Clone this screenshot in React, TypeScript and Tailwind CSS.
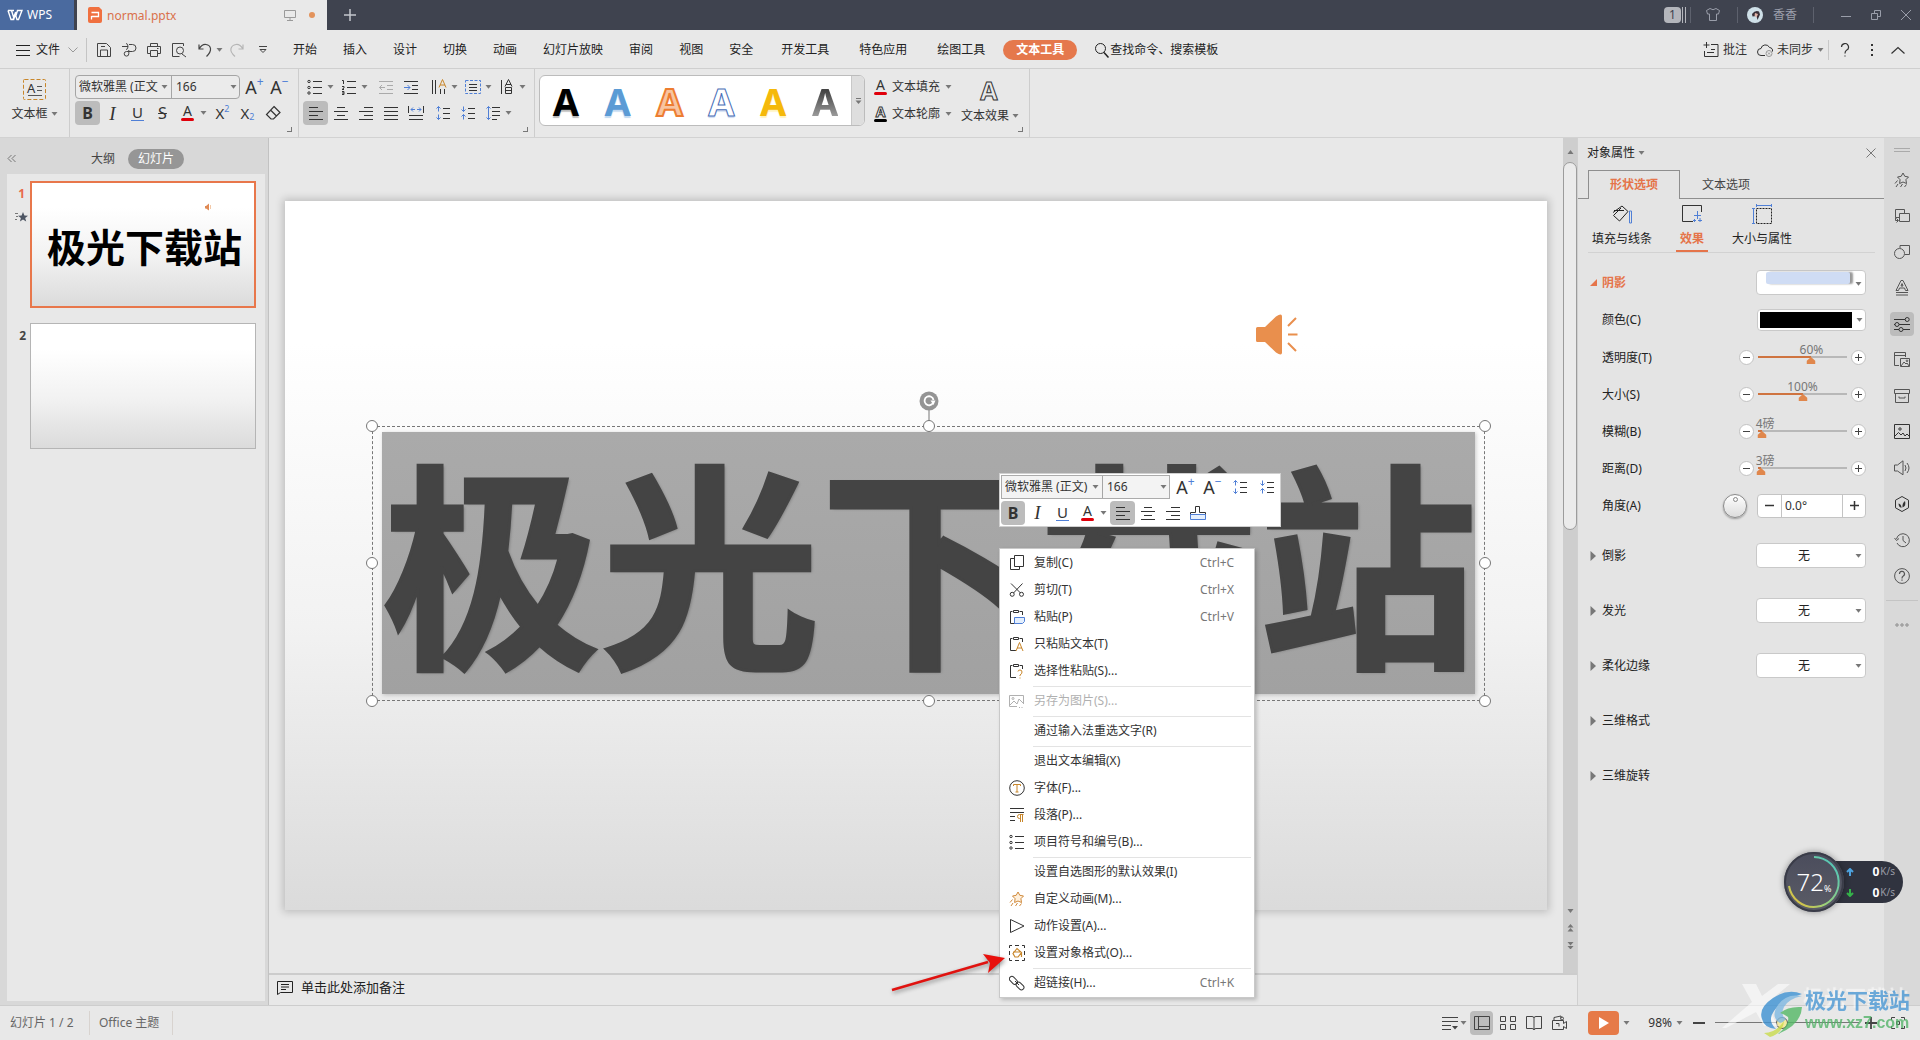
import React, { useState } from "react";
import type { ReactNode } from "react";

const BLUE = "#4f7fd6";
const GOLD = "#c8862a";

function Icon({ children, s = 16, className = "" }: { children: ReactNode; s?: number; className?: string }) {
  return (
    <svg
      width={s}
      height={s}
      viewBox={`0 0 ${s} ${s}`}
      fill="none"
      stroke="currentColor"
      strokeWidth="1"
      aria-hidden="true"
      className={`shrink-0 ${className}`}
    >
      {children}
    </svg>
  );
}

function Caret({ className = "" }: { className?: string }) {
  return (
    <svg width="7" height="4" viewBox="0 0 7 4" aria-hidden="true" className={`shrink-0 text-[#777] ${className}`}>
      <path d="M0.5 0h6L3.5 3.8z" fill="currentColor" />
    </svg>
  );
}

function Tool({
  label,
  children,
  active = false,
  className = "w-[25px]",
}: {
  label: string;
  children: ReactNode;
  active?: boolean;
  className?: string;
}) {
  return (
    <button
      type="button"
      aria-label={label}
      className={`flex h-6 shrink-0 items-center justify-center rounded ${active ? "bg-[#bcbcbc]" : ""} ${className}`}
    >
      {children}
    </button>
  );
}

function MoreTool({ label }: { label: string }) {
  return (
    <button type="button" aria-label={label} className="flex h-6 w-[10px] shrink-0 items-center">
      <Caret />
    </button>
  );
}

/* ---------- shared text-format glyphs ---------- */

function GrowA({ sign }: { sign: string }) {
  return (
    <span className="flex items-start leading-none">
      <span className="text-[18px] leading-[20px]">A</span>
      <span className="text-[12px] leading-[9px] text-[#4f7fd6]">{sign}</span>
    </span>
  );
}

const BoldI = () => <span className="text-[16px] leading-none font-bold">B</span>;
const ItalicI = () => <span className="font-['Liberation_Serif',serif] text-[19px] leading-none italic">I</span>;
const UnderI = () => (
  <span className="w-[13px] border-b border-[#4f7fd6] text-center text-[15px] leading-[15px]">U</span>
);
const ColorA = () => (
  <span className="flex flex-col items-center">
    <span className="text-[14px] leading-[12px]">A</span>
    <span className="mt-px h-[3px] w-[13px] rounded-sm bg-[#e0000b]" />
  </span>
);
const AlignL = () => (
  <Icon>
    <path d="M1 2.500h9M1 6.500h14M1 10.500h9M1 14.500h14" />
  </Icon>
);
const AlignC = () => (
  <Icon>
    <path d="M4 2.500h8M1 6.500h14M4 10.500h8M1 14.500h14" />
  </Icon>
);
const AlignR = () => (
  <Icon>
    <path d="M6 2.500h9M1 6.500h14M6 10.500h9M1 14.500h14" />
  </Icon>
);
const SpaceUp = () => (
  <Icon>
    <path d="M8 3.500h7M8 8.500h7M8 13.500h7" />
    <path stroke={BLUE} d="M3.500 1.500v5M1.500 3.500l2-2 2 2M3.500 9.500v5M1.500 12.500l2 2 2-2" />
  </Icon>
);
const SpaceDown = () => (
  <Icon>
    <path d="M8 3.500h7M8 8.500h7M8 13.500h7" />
    <path stroke={BLUE} d="M3.500 1.500v5M1.500 4.500l2 2 2-2M3.500 9.500v5M1.500 11.500l2-2 2 2" />
  </Icon>
);
const Bullets = () => (
  <Icon>
    <path d="M6 2.500h9M6 8.500h9M6 14.500h9" />
    <circle cx="2" cy="2.500" r="1.200" />
    <circle cx="2" cy="8.500" r="1.200" />
    <circle cx="2" cy="14" r="1.200" />
  </Icon>
);
const StarTrail = ({ color = "currentColor", fill = "none" }: { color?: string; fill?: string }) => (
  <Icon>
    <g stroke={color}>
      <path
        fill={fill}
        d="M9 1l1.800 3.300 3.700.700-2.600 2.700.600 3.800L9 10l-3.400 1.500.500-3.800L3.500 5l3.700-.700z"
      />
      <path d="M3.500 8.500l-2.500 3M4 12l-2 3M8.500 12l-2 3M12.500 12.500l-2 2.500" />
    </g>
  </Icon>
);

/* ---------- title bar ---------- */

function TitleBar() {
  return (
    <header className="flex h-[30px] items-stretch bg-[#3f434f] text-[#9a9eaa]">
      <button type="button" className="flex w-[74px] items-center gap-1 bg-[#4a6a9f] pl-[7px] text-[12px] text-white">
        <svg width="16" height="12" viewBox="0 0 16 12" fill="none" stroke="#fff" strokeWidth="1.400" aria-hidden="true">
          <path d="M1 1.500h3.500l2.500 8 2-6.500M7 1.500H5l-1 0M1 1.500l3 9h2l2.500-7M8 4.500l2 6h1.500L15 1.500h-4.500L8.500 8" />
        </svg>
        WPS
      </button>
      <div className="ml-[3px] flex w-[250px] items-center bg-[#e9e9e9] pr-3 pl-[11px]">
        <svg width="14" height="16" viewBox="0 0 14 16" aria-hidden="true">
          <path d="M2 0h9l3 3v11a2 2 0 0 1-2 2H2a2 2 0 0 1-2-2V2a2 2 0 0 1 2-2z" fill="#f0703f" />
          <path d="M3.500 5.500h7v4h-7M3.500 9v3.500" stroke="#fff" strokeWidth="1.300" fill="none" />
        </svg>
        <span className="ml-[5px] flex-1 pt-px text-[12px] text-[#d9714b]">normal.pptx</span>
        <svg width="12" height="12" viewBox="0 0 12 12" fill="none" stroke="#9a9a9a" aria-hidden="true">
          <path d="M.5 1.500h11v7H.5zM6 8.500v3M3 11.500h6" />
        </svg>
        <span className="ml-[13px] size-[6px] rounded-full bg-[#e3935c]" />
      </div>
      <button type="button" aria-label="新建标签" className="ml-4 px-[1px] text-[#c3c6cd]">
        <svg width="12" height="12" viewBox="0 0 12 12" stroke="currentColor" strokeWidth="1.500" aria-hidden="true">
          <path d="M6 0v12M0 6h12" />
        </svg>
      </button>
      <div className="ml-auto flex items-center pr-2">
        <span className="flex h-4 w-[17px] items-center justify-center rounded-sm bg-[#b4b6bc] text-[12px] text-[#3f434f]">1</span>
        <span className="ml-px h-4 w-[4px] border-x border-[#b4b6bc]" />
        <span className="ml-1 h-4 w-px bg-[#5d616d]" />
        <button type="button" aria-label="皮肤" className="ml-[14px]">
          <Icon>
            <path d="M5 1.500L1.500 3.500 2.500 7h2v6.500h7V7h2l1-3.500L11 1.500Q8 4 5 1.500z" />
          </Icon>
        </button>
        <span className="ml-4 h-4 w-px bg-[#5d616d]" />
        <svg width="16" height="16" viewBox="0 0 16 16" className="ml-[9px]" aria-hidden="true">
          <circle cx="8" cy="8" r="8" fill="#cfe0e8" />
          <path d="M5 7q3-4 7-2.500l1 3-2.500 5.500-1-4-4 .500z" fill="#3a3038" />
          <path d="M8 6l3 1-1.500 3.500L7.500 8.500z" fill="#e2b3a6" />
        </svg>
        <span className="ml-[10px] text-[12px]">香香</span>
        <span className="ml-4 h-4 w-px bg-[#5d616d]" />
        <button type="button" aria-label="最小化" className="ml-[26px]">
          <Icon s={12}>
            <path d="M1 7.500h10" />
          </Icon>
        </button>
        <button type="button" aria-label="还原" className="ml-[18px]">
          <Icon s={12}>
            <path d="M1.500 4.500h6v6h-6zM4.500 4.500v-3h6v6h-3" />
          </Icon>
        </button>
        <button type="button" aria-label="关闭" className="ml-[18px]">
          <Icon s={12}>
            <path d="M1 1l10 10M11 1L1 11" />
          </Icon>
        </button>
      </div>
    </header>
  );
}

/* ---------- menu row ---------- */

const shortTabs = ["开始", "插入", "设计", "切换", "动画", "幻灯片放映", "审阅", "视图", "安全"];
const longTabs = ["开发工具", "特色应用", "绘图工具"];

function MenuRow() {
  return (
    <nav className="flex h-[39px] items-center border-b border-[#cfcfcf] pt-px pr-[15px] pl-4 text-[12px] whitespace-nowrap text-[#222]">
      <button type="button" className="flex items-center">
        <Icon s={14}>
          <path d="M0 2.500h14M0 7.500h14M0 12.500h14" />
        </Icon>
        <span className="ml-[6px]">文件</span>
        <svg width="10" height="6" viewBox="0 0 10 6" fill="none" stroke="#999" className="ml-2" aria-hidden="true">
          <path d="M.5.5L5 5 9.500.5" />
        </svg>
      </button>
      <span className="ml-2 h-6 w-px bg-[#c4c4c4]" />
      <div className="ml-[4px] flex text-[#444]">
        <Tool label="保存">
          <Icon>
            <path d="M1.500 1.500h9l4 4v9h-13zM4.500 14v-6h7v6M5 4.500h4" />
          </Icon>
        </Tool>
        <Tool label="输出为PDF">
          <Icon>
            <path d="M1 4.500h6M5 1.500q2 0 2 3t-2 3M8 2.500h3.500a3.500 3.500 0 0 1 0 7H5.500a2.300 2.300 0 1 0 2.300 2.300V8" />
          </Icon>
        </Tool>
        <Tool label="打印">
          <Icon>
            <path d="M4.500 4V1.500h7V4M4.500 11.500h-3v-7h13v7h-3M4.500 8.500h7v6h-7zM11 6.500h1.500" />
          </Icon>
        </Tool>
        <Tool label="打印预览">
          <Icon>
            <path d="M12.500 4V1.500h-11v13h7M11 12L15 15" />
            <circle cx="9" cy="8.500" r="3.500" />
          </Icon>
        </Tool>
        <Tool label="撤销">
          <Icon>
            <path d="M3 2.500v4.500h4.500M3 7q3-5 7-4.500t4.500 4-4 8" strokeWidth="1.200" />
          </Icon>
        </Tool>
        <MoreTool label="撤销选项" />
        <Tool label="重做" className="w-[21px] text-[#b5b5b5]">
          <Icon>
            <path d="M14 2.500v4.500H9.500M14 7q-3-5-7-4.500t-5 4 4 8" strokeWidth="1.200" />
          </Icon>
        </Tool>
        <Tool label="自定义快速访问工具栏" className="w-8">
          <Icon s={8}>
            <path d="M0 .5h8M1 3.500l3 3 3-3z" />
          </Icon>
        </Tool>
      </div>
      <div className="ml-px flex">
        {shortTabs.map((t) => (
          <button type="button" key={t} className="px-[13px]">
            {t}
          </button>
        ))}
        {longTabs.map((t) => (
          <button type="button" key={t} className="px-[15px]">
            {t}
          </button>
        ))}
      </div>
      <button type="button" className="ml-[3px] h-5 rounded-full bg-[#e5784c] px-[13px] font-bold text-white">
        文本工具
      </button>
      <label className="ml-[17px] flex items-center">
        <Icon>
          <circle cx="6.500" cy="6.500" r="5" />
          <path d="M10 10.500l4.500 5" strokeWidth="1.500" />
        </Icon>
        <input
          aria-label="查找命令、搜索模板"
          placeholder="查找命令、搜索模板"
          className="w-[120px] bg-transparent outline-none placeholder:text-[#222]"
        />
      </label>
      <div className="ml-auto flex items-center text-[#333]">
        <button type="button" className="flex items-center gap-1">
          <Icon>
            <path d="M3.500 0v6M.5 3h6M8 2.500h7v12H1.500V9M4 10.500h7M8 7.500h4" />
          </Icon>
          批注
        </button>
        <button type="button" className="ml-[10px] flex items-center gap-1">
          <Icon>
            <path d="M8 13.500H4a3.500 3.500 0 0 1 0-7 4.500 4.500 0 0 1 8.500-1 3.500 3.500 0 0 1 3 4" />
            <circle cx="12" cy="11.500" r="3" stroke="#999" />
            <path d="M11 10.500l2 2M13 10.500l-2 2" stroke="#999" />
          </Icon>
          未同步
          <Caret />
        </button>
        <span className="ml-1 h-5 w-px bg-[#c8c8c8]" />
        <button type="button" aria-label="帮助" className="w-8">
          <Icon s={14} className="mx-auto">
            <path d="M3.500 4a3.500 3.500 0 1 1 5 3.200Q7 8 7 10.500M7 12.500v1" strokeWidth="1.200" />
          </Icon>
        </button>
        <button type="button" aria-label="更多" className="w-[22px]">
          <Icon s={14} className="mx-auto">
            <path d="M6 2h2M6 7h2M6 12h2" strokeWidth="2" />
          </Icon>
        </button>
        <button type="button" aria-label="收起功能区" className="ml-2">
          <Icon s={14}>
            <path d="M.5 10.500l6.500-6 6.500 6" strokeWidth="1.200" />
          </Icon>
        </button>
      </div>
    </nav>
  );
}

/* ---------- ribbon ---------- */

function Corner() {
  return <span className="absolute right-[6px] bottom-[5px] size-[5px] border-r border-b border-[#777]" />;
}

function FontBox({ font, mini = false }: { font: string; mini?: boolean }) {
  return (
    <div
      className={
        mini
          ? "flex h-6 w-[170px] border border-[#ababab] bg-[#f3f3f3]"
          : "flex h-6 w-[165px] rounded border border-[#a5a5a5] bg-[#ebebeb]"
      }
    >
      <span className={`relative flex items-center border-r border-[#a5a5a5] ${mini ? "w-[101px]" : "w-[96px]"}`}>
        <select
          aria-label="字体"
          className={`appearance-none overflow-hidden bg-transparent pl-[3px] text-[12px] outline-none ${mini ? "w-full" : "w-[84px]"}`}
        >
          <option>{font}</option>
        </select>
        <Caret className="pointer-events-none absolute right-[3px]" />
      </span>
      <span className="relative flex flex-1 items-center">
        <select aria-label="字号" className="w-full appearance-none bg-transparent pl-[4px] text-[12px] outline-none">
          <option>166</option>
        </select>
        <Caret className="pointer-events-none absolute right-[2px]" />
      </span>
    </div>
  );
}

const presets = [
  "text-black [text-shadow:0_2px_1px_#0004]",
  "text-[#5b9bd5] [text-shadow:0_2px_1px_#c3daf1]",
  "text-[#f8c5a0] [-webkit-text-stroke:2px_#ed7d31]",
  "text-white [-webkit-text-stroke:1px_#4a6fb8] [text-shadow:0_2px_1px_#cfdcf1]",
  "text-[#f5b90a] [text-shadow:0_2px_1px_#fff3c0]",
  "bg-linear-to-b from-[#444] from-30% to-[#c4c4c4] bg-clip-text text-transparent",
];

function Ribbon() {
  return (
    <div className="flex h-[69px] border-b border-[#d2d2d2] text-[#333]">
      <button type="button" className="flex w-[69px] flex-col items-center pt-[10px] text-[12px]">
        <svg width="24" height="21" viewBox="0 0 24 21" fill="none" aria-hidden="true">
          <rect x=".5" y=".5" width="22" height="20" rx="1" stroke={GOLD} strokeDasharray="4 2" />
          <text x="4" y="14" fontSize="13" fill="#333">A</text>
          <path d="M14 7.500h5M14 11.500h5M5 16.500h14" stroke="#555" />
        </svg>
        <span className="mt-[5px] flex items-center gap-[3px] leading-[18px]">
          文本框
          <Caret />
        </span>
      </button>
      <div className="relative flex w-[229px] flex-col gap-[2px] border-l border-[#cdcdcd] pt-[6px] pl-[5px]">
        <div className="flex">
          <FontBox font="微软雅黑 (正文" />
          <Tool label="增大字号" className="ml-[2px] w-[25px]"><GrowA sign="+" /></Tool>
          <Tool label="减小字号"><GrowA sign="−" /></Tool>
        </div>
        <div className="flex">
          <Tool label="加粗" active><BoldI /></Tool>
          <Tool label="倾斜"><ItalicI /></Tool>
          <Tool label="下划线"><UnderI /></Tool>
          <Tool label="删除线"><span className="text-[16px] leading-none line-through">S</span></Tool>
          <Tool label="字体颜色"><ColorA /></Tool>
          <MoreTool label="字体颜色选项" />
          <Tool label="上标">
            <span className="flex text-[15px] leading-4">X<span className="text-[9px] leading-[8px] text-[#4f7fd6]">2</span></span>
          </Tool>
          <Tool label="下标">
            <span className="flex items-end text-[15px] leading-4">X<span className="text-[9px] leading-[8px] text-[#4f7fd6]">2</span></span>
          </Tool>
          <Tool label="清除格式">
            <Icon><path d="M9 1.500L15 7.500 8.500 14H6L1.500 9.500zM5.500 5l6 6" strokeWidth="1.200" /></Icon>
          </Tool>
        </div>
        <Corner />
      </div>
      <div className="relative flex w-[236px] flex-col gap-[2px] border-l border-[#cdcdcd] pt-[6px] pl-[4px]">
        <div className="flex">
          <Tool label="项目符号" className="w-6"><Bullets /></Tool>
          <MoreTool label="项目符号选项" />
          <Tool label="编号" className="w-6">
            <Icon>
              <path d="M6 2.500h9M6 8.500h9M6 14.500h9M1 1.500h1.500V5M1 7.500h2v1.500l-2 1.500h2M1 12.500h2v3H1M1 14h2" />
            </Icon>
          </Tool>
          <MoreTool label="编号选项" />
          <Tool label="减少缩进" className="ml-[3px] w-6 text-[#aaa]">
            <Icon><path d="M1 2.500h14M9 6.500h6M9 10.500h6M1 14.500h14M7 8.500H1.500M4 6L1.500 8.500 4 11" /></Icon>
          </Tool>
          <Tool label="增加缩进" className="ml-px w-6">
            <Icon>
              <path d="M1 2.500h14M9 6.500h6M9 10.500h6M1 14.500h14" />
              <path stroke={BLUE} d="M1 8.500h6M4.500 6L7 8.500 4.500 11" />
            </Icon>
          </Tool>
          <Tool label="文字方向" className="ml-[4px] w-6">
            <Icon>
              <path d="M1.500 1v14M4.500 1v14M9.500 10v5M13.500 10v5" />
              <path stroke={GOLD} d="M8 8.500L11.500.5 15 8.500M9 6h5" />
            </Icon>
          </Tool>
          <MoreTool label="文字方向选项" />
          <Tool label="对齐文本" className="w-6">
            <Icon>
              <rect x=".5" y="1.500" width="15" height="13" stroke={BLUE} strokeDasharray="3 1.500" />
              <path d="M4 5.500h8M4 8.500h8M4 11.500h8" />
            </Icon>
          </Tool>
          <MoreTool label="对齐文本选项" />
          <Tool label="竖排" className="w-6">
            <Icon>
              <path d="M2.500 1v14M6 7.500L9.500.5 13 7.500M7 5.500h5M6.500 8.500h6v6h-6zM6.500 11.500h6" />
            </Icon>
          </Tool>
          <MoreTool label="竖排选项" />
        </div>
        <div className="flex">
          <Tool label="左对齐" active><AlignL /></Tool>
          <Tool label="居中"><AlignC /></Tool>
          <Tool label="右对齐"><AlignR /></Tool>
          <Tool label="两端对齐"><Icon><path d="M1 2.500h14M1 6.500h14M1 10.500h14M1 14.500h14" /></Icon></Tool>
          <Tool label="分散对齐">
            <Icon>
              <path d="M.5 1v7M15.500 1v7M1 10.500h14M1 14.500h14" />
              <path stroke={BLUE} d="M7 4.500H3M5 2.500l-2 2 2 2M9 4.500h4M11 2.500l2 2-2 2" />
            </Icon>
          </Tool>
          <Tool label="增大段间距" className="ml-[2px] w-[25px]"><SpaceUp /></Tool>
          <Tool label="减小段间距"><SpaceDown /></Tool>
          <Tool label="行距">
            <Icon>
              <path d="M7 2.500h8M7 6.500h8M7 10.500h8M7 14.500h5" />
              <path stroke={BLUE} d="M3.500 1.500v13M1.500 3.500l2-2 2 2M1.500 12.500l2 2 2-2" />
            </Icon>
          </Tool>
          <MoreTool label="行距选项" />
        </div>
        <Corner />
      </div>
      <div className="flex border-l border-[#cdcdcd] pt-[6px] pl-[4px]">
        <div className="flex h-[51px] w-[326px] overflow-hidden rounded-md border border-[#bcbcbc] bg-white">
          <div className="grid flex-1 grid-cols-6 font-['Noto_Sans',sans-serif] text-[38px] leading-[44px] font-bold">
            {presets.map((p, i) => (
              <button type="button" key={i} aria-label={`艺术字样式 ${i + 1}`} className="text-center">
                <span className={p}>A</span>
              </button>
            ))}
          </div>
          <button
            type="button"
            aria-label="更多样式"
            className="flex w-[13px] items-center justify-center border-l border-[#c8c8c8] bg-[#dedede]"
          >
            <svg width="7" height="6" viewBox="0 0 7 6" aria-hidden="true">
              <path d="M1 .5h5" stroke="#777" />
              <path d="M.5 2.500h6L3.500 6z" fill="#777" />
            </svg>
          </button>
        </div>
      </div>
      <div className="relative flex w-[165px] border-r border-[#cdcdcd] pt-[6px] pl-[9px] text-[12px] whitespace-nowrap">
        <div className="flex flex-col gap-[2px]">
          <button type="button" className="flex h-6 items-center gap-[5px]">
            <ColorA />
            <span>文本填充</span>
            <Caret />
          </button>
          <button type="button" className="flex h-[25px] items-center gap-[5px]">
            <span className="flex flex-col items-center">
              <span className="text-[14px] leading-[12px] font-bold text-white [-webkit-text-stroke:1px_#333]">A</span>
              <span className="mt-px h-[3px] w-[13px] rounded-sm bg-black" />
            </span>
            <span>文本轮廓</span>
            <Caret />
          </button>
        </div>
        <button type="button" className="ml-[9px] flex h-[51px] flex-col justify-between">
          <span className="w-[56px] text-center font-['Noto_Sans',sans-serif] text-[25px] leading-[30px] font-bold text-[#e8e8e8] [-webkit-text-stroke:1px_#333]">
            A
          </span>
          <span className="flex h-6 items-center gap-[3px]">
            文本效果
            <Caret />
          </span>
        </button>
        <Corner />
      </div>
    </div>
  );
}

/* ---------- slide list ---------- */

const slideBg = "bg-linear-to-b from-white from-20% via-[#f2f2f2] via-60% to-[#dbdbdb]";

function SlidePanel() {
  return (
    <aside className="flex w-[269px] shrink-0 flex-col border-r border-[#c2c2c2] bg-[#d8d8d8] pr-[3px] pb-1 pl-[7px] text-[12px]">
      <div className="flex h-9 items-center pt-[5px]">
        <button type="button" aria-label="收起" className="text-[#777]">
          <Icon s={9}>
            <path d="M4.500 1L1 4.500 4.500 8M8.500 1L5 4.500 8.500 8" />
          </Icon>
        </button>
        <button type="button" className="ml-[75px] text-[#444]">大纲</button>
        <button type="button" className="ml-[13px] h-5 rounded-full bg-[#969696] px-[10px] text-white">幻灯片</button>
      </div>
      <ol className="flex flex-1 flex-col gap-[15px] bg-[#e8e8e8] pt-[7px] pr-[9px]">
        <li className="flex">
          <span className="flex w-[23px] flex-col items-end gap-[9px] pt-[5px] pr-[5px] text-[12px] leading-4 font-bold text-[#e8694a]">
            1
            <svg width="13" height="12" viewBox="0 0 13 12" aria-hidden="true" className="-mr-[3px]">
              <path d="M0 2.500h3M1 5.500h2M0 8.500h2" stroke="#777" />
              <path d="M8 1l1.400 3.500 3.600.2-2.800 2.300 1 3.600L8 8.600l-3.100 2 1-3.600L3 4.700l3.600-.2z" fill="#4d5563" />
            </svg>
          </span>
          <button
            type="button"
            className={`relative flex h-[127px] flex-1 items-center justify-center border-2 border-[#e8774b] pl-[3px] ${slideBg}`}
          >
            <span className="font-['Noto_Sans_CJK_SC',sans-serif] text-[39px] leading-[40px] font-bold whitespace-nowrap text-black">
              极光下载站
            </span>
            <svg width="8" height="8" viewBox="0 0 8 8" className="absolute top-5 right-[41px]" aria-hidden="true">
              <path d="M0 3h1L4 .5v7L1 5.500H0z" fill="#e08a55" />
              <path d="M5.500 2v4" stroke="#f3c9a8" />
            </svg>
          </button>
        </li>
        <li className="flex">
          <span className="w-[23px] pt-[5px] pr-[4px] text-right text-[12px] leading-4 font-bold text-[#444]">2</span>
          <button type="button" aria-label="幻灯片 2" className={`h-[126px] flex-1 border border-[#b5b5b5] ${slideBg}`} />
        </li>
      </ol>
    </aside>
  );
}

/* ---------- floating toolbar and menu ---------- */

function MiniToolbar() {
  return (
    <div className="absolute top-[272px] left-[714px] h-[54px] w-[282px] border border-[#d0d0d0] bg-white pt-px pl-px text-[#333]">
      <div className="flex">
        <FontBox font="微软雅黑 (正文)" mini />
        <Tool label="增大字号" className="ml-[2px] w-[27px]"><GrowA sign="+" /></Tool>
        <Tool label="减小字号" className="w-[27px]"><GrowA sign="−" /></Tool>
        <Tool label="增大段间距" className="w-[27px]"><SpaceUp /></Tool>
        <Tool label="减小段间距" className="w-[27px]"><SpaceDown /></Tool>
      </div>
      <div className="mt-[2px] flex">
        <Tool label="加粗" active className="w-6"><BoldI /></Tool>
        <Tool label="倾斜"><ItalicI /></Tool>
        <Tool label="下划线"><UnderI /></Tool>
        <Tool label="字体颜色"><ColorA /></Tool>
        <MoreTool label="字体颜色选项" />
        <Tool label="左对齐" active><AlignL /></Tool>
        <Tool label="居中"><AlignC /></Tool>
        <Tool label="右对齐"><AlignR /></Tool>
        <Tool label="格式刷">
          <Icon>
            <path d="M.5 12V7.500h5V1.500h4v6h6V12" />
            <path d="M.5 9.500h15v5H.5z" stroke={BLUE} fill="#e4effd" />
          </Icon>
        </Tool>
      </div>
    </div>
  );
}

const Clip = ({ children }: { children: ReactNode }) => (
  <Icon>
    <path d="M7 14.500H1.500v-12h2M10.500 2.500h3V6M4.500 1.500h5v2h-5z" />
    {children}
  </Icon>
);

type Entry = { label: string; icon?: ReactNode; key?: string; off?: boolean } | null;

const entries: Entry[] = [
  {
    label: "复制(C)",
    key: "Ctrl+C",
    icon: (
      <Icon>
        <path d="M5.500.5h9v11h-9zM5 3.500H1.500v11h9V12" />
      </Icon>
    ),
  },
  {
    label: "剪切(T)",
    key: "Ctrl+X",
    icon: (
      <Icon>
        <path d="M2 1.500l9.500 9.500M13.500 1.500L4.500 11" />
        <circle cx="3.200" cy="12.300" r="2" />
        <circle cx="12.500" cy="12.300" r="2" />
      </Icon>
    ),
  },
  {
    label: "粘贴(P)",
    key: "Ctrl+V",
    icon: (
      <Clip>
        <path d="M5.500 8.500h10v4l-2 2h-8z" stroke={BLUE} fill="#e4effd" />
      </Clip>
    ),
  },
  {
    label: "只粘贴文本(T)",
    icon: (
      <Clip>
        <path d="M7 15l3.500-8.500L14 15M8 12h5" stroke={GOLD} />
      </Clip>
    ),
  },
  {
    label: "选择性粘贴(S)...",
    icon: (
      <Clip>
        <path d="M9 8.500q0-1.500 2-1.500t2 2-2 3V13M11 14.500v1" stroke={GOLD} />
      </Clip>
    ),
  },
  null,
  {
    label: "另存为图片(S)...",
    off: true,
    icon: (
      <Icon>
        <path d="M8 13.500H.5v-11h14V11M1 12l4-4 3 3 2-5 4 4M10 14.500h1M12.500 14.500h1" />
        <circle cx="4" cy="5.500" r="1" />
      </Icon>
    ),
  },
  null,
  { label: "通过输入法重选文字(R)" },
  null,
  { label: "退出文本编辑(X)" },
  {
    label: "字体(F)...",
    icon: (
      <Icon>
        <circle cx="8" cy="8" r="7.300" />
        <path d="M4.500 6V4.500h7V6M8 4.500v7.500M6.500 12h3" stroke={GOLD} />
      </Icon>
    ),
  },
  {
    label: "段落(P)...",
    icon: (
      <Icon>
        <path d="M1 1.500h14M1 5.500h14M1 9.500h5M1 13.500h5" />
        <path d="M14.500 7.500h-4a2 2 0 0 0 0 4h1M11.500 7.500V15M13.500 7.500V15" stroke={GOLD} />
      </Icon>
    ),
  },
  { label: "项目符号和编号(B)...", icon: <Bullets /> },
  null,
  { label: "设置自选图形的默认效果(I)" },
  { label: "自定义动画(M)...", icon: <StarTrail color="#d08a3c" fill="#fff0dc" /> },
  {
    label: "动作设置(A)...",
    icon: (
      <Icon>
        <path d="M1.500 1.500L15 8 1.500 14.500z" />
      </Icon>
    ),
  },
  {
    label: "设置对象格式(O)...",
    icon: (
      <Icon>
        <path d="M.5 3V.5H3M6 .5h4M13 .5h2.500V3M15.500 6v4M15.500 13v2.500H13M10 15.500H6M3 15.500H.5V13M.5 10V6" />
        <path d="M4 8.500l4-5 4.500 4-3.500 4.500H6zM4 7h8M12.500 8v4" stroke={GOLD} strokeWidth="1.200" />
      </Icon>
    ),
  },
  null,
  {
    label: "超链接(H)...",
    key: "Ctrl+K",
    icon: (
      <Icon>
        <rect x="-1" y="2.500" width="9" height="5" rx="2.500" transform="rotate(45 4 5) translate(1 0)" />
        <rect x="6.500" y="8.500" width="9" height="5" rx="2.500" transform="rotate(45 11 11)" />
        <path d="M6 6l4 4" />
      </Icon>
    ),
  },
];

function ContextMenu() {
  return (
    <div
      role="menu"
      className="absolute top-[347px] left-[714px] w-[256px] border border-[#c9c9c9] bg-white pt-px text-[12px] text-[#333] shadow-[2px_2px_4px_#0003]"
    >
      {entries.map((e, i) =>
        e ? (
          <button
            type="button"
            role="menuitem"
            key={e.label}
            disabled={e.off}
            className={`flex h-[27px] w-full items-center pr-[18px] pl-[9px] ${e.off ? "text-[#b0b0b0]" : ""}`}
          >
            <span className="w-[25px]">{e.icon}</span>
            <span>{e.label}</span>
            <span className="ml-auto w-[38px] text-[#777]">{e.key}</span>
          </button>
        ) : (
          <hr key={i} className="my-px mr-[3px] ml-[33px] border-[#e3e3e3]" />
        ),
      )}
    </div>
  );
}

/* ---------- editing area ---------- */

const handles = [
  "-top-[7px] -left-[7px]",
  "-top-[7px] left-1/2 -translate-x-1/2",
  "-top-[7px] -right-[7px]",
  "top-1/2 -left-[7px] -translate-y-1/2",
  "top-1/2 -right-[7px] -translate-y-1/2",
  "-bottom-[7px] -left-[7px]",
  "-bottom-[7px] left-1/2 -translate-x-1/2",
  "-right-[7px] -bottom-[7px]",
];

function Slide() {
  return (
    <div className={`relative aspect-video w-full shadow-[0_0_8px_2px_#00000030] ${slideBg}`}>
      <svg width="42" height="42" viewBox="0 0 42 42" className="absolute top-[113px] left-[971px]" aria-hidden="true">
        <path d="M0 14.500q0-1.500 1.500-1.500H9L20 2.500q6-4 6 0v36q0 4-6 0L9 28H1.500Q0 28 0 26.500z" fill="#e98f4d" />
        <path d="M32 12l8-8M32 20.500h9.500M32 29l8 8" stroke="#e98f4d" strokeWidth="2" />
      </svg>
      <div className="absolute top-[225px] left-[87px] h-[275px] w-[1113px] border border-dashed border-[#777] p-[5px_9px_6px_9px]">
        <p className="h-full bg-linear-to-b from-[#aaaaaa] to-[#a1a1a1] text-center font-['Noto_Sans_CJK_SC',sans-serif] text-[219px] leading-[249px] font-bold whitespace-nowrap text-[#444] shadow-[1px_1px_4px_#0003] [-webkit-text-stroke:3px_#444] [text-shadow:2px_1px_3px_#0004]">
          极光下载站
        </p>
        {handles.map((h) => (
          <span key={h} className={`absolute size-3 rounded-full border border-[#777] bg-white ${h}`} />
        ))}
        <svg width="20" height="30" viewBox="0 0 20 30" className="absolute -top-[36px] left-1/2 -translate-x-1/2" aria-hidden="true">
          <path d="M10 18v12" stroke="#777" />
          <circle cx="10" cy="10" r="9.500" fill="#949494" />
          <path d="M14 12a4.500 4.500 0 1 1 .5-3" stroke="#fff" strokeWidth="1.800" fill="none" />
          <path d="M11.500 9.500h5L14.500 14z" fill="#fff" />
        </svg>
      </div>
      <MiniToolbar />
      <ContextMenu />
      <svg
        width="120"
        height="44"
        viewBox="0 0 120 44"
        className="absolute top-[751px] left-[604px] drop-shadow-[1px_2px_2px_#0006]"
        aria-hidden="true"
      >
        <path d="M3 38L99 10" stroke="#e0120f" strokeWidth="2.500" />
        <path d="M94 2l22 4-17 15 2-10z" fill="#e8100c" />
      </svg>
    </div>
  );
}

function VerticalScroll() {
  return (
    <div className="flex w-[14px] shrink-0 flex-col items-center bg-[#cecece] pt-[12px] pb-6 text-[#777]">
      <svg width="7" height="4" viewBox="0 0 7 4" aria-hidden="true">
        <path d="M.5 4h6L3.500 0z" fill="currentColor" />
      </svg>
      <span className="mt-2 h-[368px] w-[14px] rounded-full border border-[#9c9c9c] bg-[#ebebeb]" />
      <svg width="7" height="40" viewBox="0 0 7 40" className="mt-auto" aria-hidden="true">
        <path d="M.5 0h6L3.500 4zM.5 18.500h6l-3-3.500zM.5 22.500h6l-3-3.500zM.5 33h6l-3 3.500zM.5 37h6l-3 3.500z" fill="currentColor" />
      </svg>
    </div>
  );
}

function Editor() {
  return (
    <main className="flex min-w-0 flex-1 flex-col">
      <div className="flex flex-1">
        <div className="flex min-w-0 flex-1 items-center px-4">
          <Slide />
        </div>
        <VerticalScroll />
      </div>
      <label className="flex h-8 items-center border-t-2 border-[#cccccc] pb-1 pl-2 text-[13px] text-[#222]">
        <Icon>
          <path d="M.5 1.500h15v11h-12l-3 2zM4 4.500h8M4 7h8M4 9.500h5" />
        </Icon>
        <input
          aria-label="备注"
          placeholder="单击此处添加备注"
          className="ml-2 flex-1 bg-transparent outline-none placeholder:text-[#222]"
        />
      </label>
    </main>
  );
}

/* ---------- property panel ---------- */

function RoundBtn({ label, plus = false }: { label: string; plus?: boolean }) {
  return (
    <button
      type="button"
      aria-label={label}
      className="flex size-[15px] items-center justify-center rounded-full border border-[#c2c2c2] bg-white text-[#444]"
    >
      <Icon s={9}>
        <path d={plus ? "M1 4.500h7M4.500 1v7" : "M1 4.500h7"} />
      </Icon>
    </button>
  );
}

function SliderRow({ label, text, start }: { label: string; text: string; start: number }) {
  const [v, setV] = useState(start);
  return (
    <label className="flex h-[37px] items-center pl-[13px]">
      <span className="flex-1">{label}</span>
      <RoundBtn label={`减小 ${label}`} plus={false} />
      <span className="relative mx-1 h-[37px] w-[89px]">
        <span className="absolute top-[17px] h-[2px] w-full bg-[#b8b8b8]" />
        <span className="absolute top-[17px] h-[2px] bg-[#cf7440]" style={{ width: `${v}%` }} />
        <span
          className="absolute top-[2px] -translate-x-1/2 leading-[18px] whitespace-nowrap text-[#777]"
          style={{ left: `${Math.max(v, 8)}%` }}
        >
          {text}
        </span>
        <svg
          width="9"
          height="7"
          viewBox="0 0 9 7"
          className="absolute top-[18px] -translate-x-1/2"
          style={{ left: `${v}%` }}
          aria-hidden="true"
        >
          <path d="M4.500 0L9 4v3H0V4z" fill="#e0874c" />
        </svg>
        <input
          type="range"
          aria-label={label}
          value={v}
          onChange={(e) => setV(Number(e.target.value))}
          className="absolute inset-0 h-full w-full opacity-0"
        />
      </span>
      <RoundBtn label={`增大 ${label}`} plus />
    </label>
  );
}

function NoneRow({ label, select = false }: { label: string; select?: boolean }) {
  return (
    <div className="flex h-[55px] items-center">
      <button type="button" className="flex flex-1 items-center gap-[6px] pl-px">
        <svg width="6" height="10" viewBox="0 0 6 10" aria-hidden="true">
          <path d="M.5 0v10L6 5z" fill="#777" />
        </svg>
        {label}
      </button>
      {select && (
        <span className="relative flex h-[25px] w-[110px] items-center rounded border border-[#c9c9c9] bg-white">
          <select aria-label={label} className="w-full appearance-none bg-transparent pr-[14px] text-center outline-none">
            <option>无</option>
          </select>
          <Caret className="pointer-events-none absolute right-[3px]" />
        </span>
      )}
    </div>
  );
}

function PropertyPanel() {
  return (
    <section className="w-[307px] shrink-0 border-l border-[#d0d0d0] bg-[#e4e4e4] text-[12px] text-[#222]">
      <div className="flex h-[32px] items-center pr-[8px] pb-[2px] pl-[9px]">
        <button type="button" className="flex items-center gap-[3px]">
          对象属性
          <Caret />
        </button>
        <button type="button" aria-label="关闭窗格" className="ml-auto text-[#777]">
          <Icon s={10}>
            <path d="M.5.500l9 9M9.500.500l-9 9" />
          </Icon>
        </button>
      </div>
      <div className="flex h-[29px]" role="tablist">
        <span className="w-[10px] border-b border-[#8e8e8e]" />
        <button
          type="button"
          role="tab"
          className="w-[92px] border border-b-0 border-[#8e8e8e] font-bold text-[#e5744a]"
        >
          形状选项
        </button>
        <span className="flex-1 border-b border-[#8e8e8e] pt-px pl-[22px]">
          <button type="button" role="tab" className="h-7 text-[#444]">
            文本选项
          </button>
        </span>
      </div>
      <div className="mr-[9px] ml-[10px] flex h-[54px] items-end border-b border-[#d2d2d2]">
        <button type="button" className="flex h-[54px] w-[68px] flex-col items-center gap-[7px] pt-[6px]">
          <Icon s={20}>
            <path d="M1 8.500l9-6.500 6 5.500-8.500 9.500L1.500 11.500 9 4M2 6.500h10" />
            <path d="M17.500 7h2v12h-2z" stroke={BLUE} />
          </Icon>
          <span className="leading-4">填充与线条</span>
        </button>
        <button
          type="button"
          className="mx-5 flex h-[54px] w-8 flex-col items-center gap-[7px] border-b-2 border-[#e5744a] pt-[6px] font-bold text-[#e5744a]"
        >
          <Icon s={20} className="text-[#333]">
            <path d="M11 17.500H.5v-16h19V8" />
            <path d="M15.500 7v8M12 11.500h7M12.500 15v3M11 16.500h3M18 14v4M16 16.500h4" stroke={BLUE} />
          </Icon>
          <span className="leading-4 whitespace-nowrap">效果</span>
        </button>
        <button type="button" className="flex h-[54px] w-[68px] flex-col items-center gap-[7px] pt-[6px]">
          <Icon s={20}>
            <rect x="4.500" y="4.500" width="15" height="15" strokeDasharray="2 1" />
            <path d="M4 1.500h15.500M4.500 0v3M19.500 0v3M1.500 4v15.500M0 4.500h3M0 19.500h3" stroke={BLUE} />
          </Icon>
          <span className="leading-4">大小与属性</span>
        </button>
      </div>
      <div className="mt-[11px] mr-[18px] ml-[11px]">
        <div className="flex h-[37px] items-center">
          <button type="button" className="flex flex-1 items-center gap-[5px] pl-px font-bold text-[#e5744a]">
            <svg width="7" height="7" viewBox="0 0 7 7" aria-hidden="true">
              <path d="M7 0v7H0z" fill="currentColor" />
            </svg>
            阴影
          </button>
          <button
            type="button"
            aria-label="阴影样式"
            className="relative h-[25px] w-[110px] rounded border border-[#c9c9c9] bg-white"
          >
            <span className="absolute top-px left-[9px] h-3 w-[84px] rounded-xs bg-[#cfdcf4] shadow-[3px_0_2px_#999]" />
            <Caret className="absolute top-[11px] right-[3px]" />
          </button>
        </div>
        <div className="flex h-[38px] items-center pl-[13px]">
          <span className="flex-1">颜色(C)</span>
          <button
            type="button"
            aria-label="颜色"
            className="flex h-[22px] w-[109px] items-center justify-between rounded border border-[#c9c9c9] bg-white pr-[2px] pl-[2px]"
          >
            <span className="h-4 w-[92px] bg-black" />
            <Caret />
          </button>
        </div>
        <SliderRow label="透明度(T)" text="60%" start={60} />
        <SliderRow label="大小(S)" text="100%" start={50} />
        <SliderRow label="模糊(B)" text="4磅" start={5} />
        <SliderRow label="距离(D)" text="3磅" start={3} />
        <div className="flex h-[37px] items-center pl-[13px]">
          <span className="flex-1">角度(A)</span>
          <span className="mr-[10px] flex size-6 justify-center rounded-full border border-[#8a8a8a] bg-linear-to-b from-white to-[#dcdcdc] pt-[2px] shadow-[0_1px_2px_#0005]">
            <span className="size-[5px] rounded-full border border-[#888]" />
          </span>
          <span className="flex h-6 w-[109px] items-center rounded border border-[#c4c4c4] bg-white text-[#333]">
            <button type="button" aria-label="减小角度" className="flex w-[23px] justify-center">
              <Icon s={9}>
                <path d="M0 4.500h9" strokeWidth="1.500" />
              </Icon>
            </button>
            <input
              aria-label="角度"
              defaultValue="0.0°"
              className="h-full w-[62px] border-x border-[#c4c4c4] pl-[3px] outline-none"
            />
            <button type="button" aria-label="增大角度" className="flex flex-1 justify-center">
              <Icon s={9}>
                <path d="M0 4.500h9M4.500 0v9" strokeWidth="1.500" />
              </Icon>
            </button>
          </span>
        </div>
        <div className="mt-1">
          <NoneRow label="倒影" select />
          <NoneRow label="发光" select />
          <NoneRow label="柔化边缘" select />
          <NoneRow label="三维格式" />
          <NoneRow label="三维旋转" />
        </div>
      </div>
    </section>
  );
}

const rail: [string, ReactNode][] = [
  ["动画", <StarTrail />],
  [
    "切换",
    <Icon>
      <path d="M5 9.500H1.500v-8h9V5M5.500 5.500h10v8h-10zM1.500 9.500v3H4M2.500 10.500l2 2-2 2" />
    </Icon>,
  ],
  [
    "形状",
    <Icon>
      <circle cx="5.500" cy="9.500" r="5" />
      <path d="M6 4V1.500h9.500v9H11" />
    </Icon>,
  ],
  [
    "艺术字",
    <Icon>
      <path d="M2 10.500L7 .5h2l5 10h-2.500L10.500 8h-5l-1 2.500zM7 6h2L8 3.500zM2 12.500h12M2 15h12" />
    </Icon>,
  ],
  [
    "属性",
    <Icon className="text-[#333]">
      <path d="M0 3.500h11M5 8.500h11M0 13.500h5M9 13.500h7M0 8.500h1" />
      <circle cx="13.200" cy="3.500" r="2" />
      <circle cx="3" cy="8.500" r="2" />
      <circle cx="7" cy="13.500" r="2" />
    </Icon>,
  ],
  [
    "模板",
    <Icon>
      <path d="M5 13.500H.5V.5h11V5M.5 3.500h11M6.500 6.500h9v8h-9zM7 14l3-4 2 2 1-1 2 3" />
      <circle cx="13" cy="8.800" r=".8" />
    </Icon>,
  ],
  [
    "素材",
    <Icon>
      <path d="M.5 1.500h15v4H.5zM1.500 5.500h13v9h-13zM5 8.500v1.500h6V8.500" />
    </Icon>,
  ],
  [
    "图片",
    <Icon className="text-[#333]">
      <path d="M.5.5h15v14H.5zM1 12l3.500-3.500L7 11l2-2 2 3 2-2 2 2" />
      <circle cx="6" cy="5" r="1.200" />
    </Icon>,
  ],
  [
    "音频",
    <Icon>
      <path d="M.5 5h3L9 .8v14L3.500 11h-3zM11 5q2 3 0 6M13 3q4 5 0 10" />
    </Icon>,
  ],
  [
    "推荐",
    <Icon className="text-[#333]">
      <path d="M8 .5l6.500 3.700v7.600L8 15.500 1.500 11.800V4.200z" />
      <path d="M7.500 12Q4.500 11 4.500 7.500q3 .5 3 4.500zM8.500 11.500Q8 7 11 5q1.500 5-2.500 6.500z" fill="currentColor" stroke="none" />
    </Icon>,
  ],
  [
    "历史",
    <Icon>
      <path d="M3 11A6.500 6.500 0 1 0 2.500 7M.5 6l2 2.500L5 6.500M9 4v4.500l3 2.500" />
    </Icon>,
  ],
  [
    "帮助",
    <Icon>
      <circle cx="8" cy="8" r="7.400" />
      <path d="M5.500 6A2.500 2.500 0 1 1 9 8.200Q8 8.800 8 10.500M8 11.500v1.300" strokeWidth="1.200" />
    </Icon>,
  ],
];

function Rail() {
  return (
    <div className="flex w-9 shrink-0 flex-col items-center bg-[#d9d9d9] text-[#555]">
      <svg width="16" height="4" viewBox="0 0 16 4" stroke="#aaa" className="mt-[10px]" aria-hidden="true">
        <path d="M0 .5h16M0 3.500h16" />
      </svg>
      <div className="mt-[16px] flex flex-col gap-3">
        {rail.map(([label, icon]) => (
          <Tool key={label} label={label} active={label === "属性"} className="w-6">
            {icon}
          </Tool>
        ))}
      </div>
      <span className="mt-3 h-px w-8 bg-[#c4c4c4]" />
      <button type="button" aria-label="更多工具" className="mt-[22px]">
        <svg width="14" height="4" viewBox="0 0 14 4" fill="none" stroke="#888" aria-hidden="true">
          <circle cx="2" cy="2" r="1.200" />
          <circle cx="7" cy="2" r="1.200" />
          <circle cx="12" cy="2" r="1.200" />
        </svg>
      </button>
    </div>
  );
}

/* ---------- status bar ---------- */

function StatusBar() {
  return (
    <footer className="flex h-[35px] items-center border-t border-[#cdcdcd] pr-[15px] pb-px pl-[10px] text-[12px] whitespace-nowrap text-[#666]">
      <span className="w-[79px]">幻灯片 1 / 2</span>
      <span className="h-6 w-px bg-[#d8d3cf]" />
      <span className="w-[82px] pl-[9px]">Office 主题</span>
      <span className="h-6 w-px bg-[#d8d3cf]" />
      <div className="ml-auto flex items-center text-[#444]">
        <Tool label="备注" className="w-5">
          <Icon>
            <path d="M0 2.500h16M0 6.500h16M0 10.500h9M0 14.500h9" />
            <path d="M10 11h6l-3 3.500z" fill="currentColor" stroke="none" />
          </Icon>
        </Tool>
        <MoreTool label="备注选项" />
        <Tool label="普通视图" active className="w-[23px]">
          <Icon>
            <path d="M.5 1.500h15v13H.5zM4.500 1.500v13M4.500 11.500h11" />
          </Icon>
        </Tool>
        <Tool label="幻灯片浏览" className="ml-[2px] w-[26px]">
          <Icon>
            <path d="M.5 1.500h5v5h-5zM10.500 1.500h5v5h-5zM.5 9.500h5v5h-5zM10.500 9.500h5v5h-5z" />
          </Icon>
        </Tool>
        <Tool label="阅读视图" className="w-[26px]">
          <Icon>
            <path d="M.5 1.500H6q2 0 2 1.500 0-1.500 2-1.500h5.500v12H10q-2 0-2 1.500 0-1.500-2-1.500H.5zM8 3v12" />
          </Icon>
        </Tool>
        <Tool label="录制" className="w-[26px]">
          <Icon>
            <path d="M.5 5.500h11v3l3-2v7l-3-2v3H.5zM2 5V2.500l7-1.500v2.500M4 8.500h3v3" />
            <circle cx="10" cy="3.500" r="1.500" />
          </Icon>
        </Tool>
        <button
          type="button"
          aria-label="放映"
          className="ml-[15px] flex h-6 w-[31px] items-center justify-center rounded bg-[#e67a48]"
        >
          <svg width="10" height="12" viewBox="0 0 10 12" aria-hidden="true">
            <path d="M0 0l10 6-10 6z" fill="#fff" />
          </svg>
        </button>
        <Caret className="ml-1" />
        <button type="button" className="ml-[18px] flex items-center gap-1 text-[#333]">
          98%
          <Caret />
        </button>
        <button type="button" aria-label="缩小" className="ml-[10px] h-[2px] w-3 bg-[#444]" />
        <span className="relative ml-[10px] flex h-6 w-[144px] items-center">
          <span className="h-px w-full bg-[#777]" />
          <span className="absolute left-[61px] size-3 rounded-full border border-[#555] bg-[#f3e9a0]" />
          <input type="range" aria-label="缩放" defaultValue={47} className="absolute inset-0 w-full opacity-0" />
        </span>
        <button type="button" aria-label="放大" className="ml-[6px]">
          <Icon s={12}>
            <path d="M6 0v12M0 6h12" strokeWidth="1.800" />
          </Icon>
        </button>
        <button type="button" aria-label="全屏" className="ml-[14px]">
          <Icon s={14}>
            <path d="M.5 4V1.500H4M10 1.500h3.500V4M13.500 10v2.500H10M4 12.500H.5V10M5.500 5.500h3v3h-3z" />
          </Icon>
        </button>
      </div>
    </footer>
  );
}

/* ---------- overlays ---------- */

function NetMeter() {
  return (
    <div className="absolute right-[17px] bottom-[128px] flex items-center">
      <div className="relative z-10 flex size-[60px] items-center justify-center rounded-full bg-linear-to-b from-[#4a4c5c] to-[#5b5c66] text-white shadow-[0_0_6px_#0006]">
        <svg width="60" height="60" viewBox="0 0 60 60" fill="none" className="absolute inset-0" aria-hidden="true">
          <defs>
            <linearGradient id="ring" x1="1" y1="0" x2="0" y2="1">
              <stop offset="0" stopColor="#45c2c4" />
              <stop offset="0.600" stopColor="#9ad27c" />
              <stop offset="1" stopColor="#f1b92e" />
            </linearGradient>
          </defs>
          <circle cx="30" cy="30" r="29" stroke="#3a3c48" strokeWidth="2" />
          <path d="M30 5a25 25 0 1 1-25 29" stroke="url(#ring)" strokeWidth="2" />
        </svg>
        <span className="text-[24px] leading-none font-light">72</span>
        <span className="self-end pb-[19px] text-[9px] leading-none">%</span>
      </div>
      <div className="-ml-[10px] flex h-[42px] w-[69px] flex-col justify-center rounded-r-full bg-[#30333f] pr-2 pl-[12px] text-[12px] leading-[21px]">
        <span className="flex items-center">
          <Icon s={8} className="text-[#4da3e0]">
            <path d="M4 8V1M1 4l3-3 3 3" strokeWidth="2" />
          </Icon>
          <b className="ml-auto text-white">0</b>
          <span className="ml-px text-[10px] text-[#9a9ca6]">K/s</span>
        </span>
        <span className="flex items-center">
          <Icon s={8} className="text-[#35b34a]">
            <path d="M4 0v7M1 4l3 3 3-3" strokeWidth="2" />
          </Icon>
          <b className="ml-auto text-white">0</b>
          <span className="ml-px text-[10px] text-[#9a9ca6]">K/s</span>
        </span>
      </div>
    </div>
  );
}

function Watermark() {
  return (
    <div className="pointer-events-none absolute right-[10px] bottom-0 flex h-[58px] items-start opacity-80">
      <svg width="84" height="58" viewBox="0 0 84 58" aria-hidden="true">
        <path d="M20 2h14l6 12L56 2h12L44 22l12 22H42l-8-14L4 46H0l30-26z" fill="#fff" opacity="0.700" />
        <g transform="translate(38 9)">
          <path d="M42 3Q28-3 13 7T2 28q2 9 14 10-9-8-2-18T42 3z" fill="#3f93d4" />
          <path d="M42 5Q26 2 18 14t2 18q4-1 6-4-6-4-2-12T42 5z" fill="#7fb9e2" />
          <path d="M20 22q8-7 22-6-1 18-24 27 12-10 10-17-4-3-8-4z" fill="#54b866" />
          <path d="M4 42q12 0 20-12-1 12-14 16z" fill="#c9dc4c" />
        </g>
      </svg>
      <div className="-ml-px pt-[5px]">
        <div className="text-[21px] leading-[26px] font-bold text-[#4c9ad6] [text-shadow:-2px_-3px_1px_#ffffffb0]">极光下载站</div>
        <div className="font-['Liberation_Sans',sans-serif] text-[16px] leading-[20px] font-bold text-[#55b46a]">www.xz7.com</div>
      </div>
    </div>
  );
}

export default function App() {
  return (
    <div className="relative flex min-h-screen flex-col overflow-hidden bg-[#e8e8e8] font-['Noto_Sans','Noto_Sans_CJK_SC',sans-serif]">
      <TitleBar />
      <MenuRow />
      <Ribbon />
      <div className="flex flex-1">
        <SlidePanel />
        <Editor />
        <PropertyPanel />
        <Rail />
      </div>
      <StatusBar />
      <NetMeter />
      <Watermark />
    </div>
  );
}
